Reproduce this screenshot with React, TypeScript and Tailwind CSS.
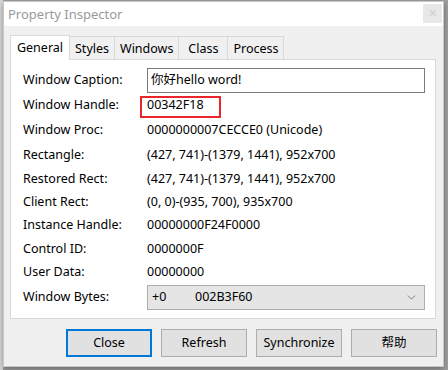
import { ChevronDown } from "lucide-react";

const rows = [
  { label: "Window Handle:", value: "00342F18", h: "h-[25px]", mark: true },
  { label: "Window Proc:", value: "0000000007CECCE0 (Unicode)", h: "h-[25px]" },
  { label: "Rectangle:", value: "(427, 741)-(1379, 1441), 952x700", h: "h-[25px]" },
  { label: "Restored Rect:", value: "(427, 741)-(1379, 1441), 952x700", h: "h-[23px]" },
  { label: "Client Rect:", value: "(0, 0)-(935, 700), 935x700", h: "h-[23px]" },
  { label: "Instance Handle:", value: "00000000F24F0000", h: "h-[23px]" },
  { label: "Control ID:", value: "0000000F", h: "h-[24px]" },
  { label: "User Data:", value: "00000000", h: "h-[23px]" },
];

const tabs = ["General", "Styles", "Windows", "Class", "Process"];
const buttons = ["Close", "Refresh", "Synchronize", "帮助"];

export default function App() {
  return (
    <div
      className="relative h-[370px] w-[448px] overflow-hidden bg-[#a0a0a0]"
      style={{ fontFamily: '"Noto Sans", "Noto Sans CJK SC", sans-serif' }}
    >
      <div className="absolute left-0 top-0 h-[370px] w-[3px] bg-[#d8d8d8]" />
      <div className="absolute left-[3px] top-[1px] flex h-[366px] w-[441px] flex-col border border-[#c8c8c8] bg-[#f0f0f0] shadow-[0_2px_6px_rgba(0,0,0,0.35)]">
        <div className="flex h-[24px] items-start justify-between bg-white">
          <span className="pl-[4px] pt-[2px] text-[13px] leading-[20px] text-[#9a9a9a]">
            Property Inspector
          </span>
          <div className="mr-[1px] mt-[2px] flex h-[19px] w-[19px] items-center justify-center bg-[#e8e8e8] text-[11px] text-[#cfcfcf]">
            ✕
          </div>
        </div>

        <div className="mt-[9px] flex h-[24px] items-end pl-[6px] text-[12.5px] text-black">
          {tabs.map((t, i) =>
            i === 0 ? (
              <div
                key={t}
                className="relative z-10 -mb-px flex h-[25px] w-[60px] items-center justify-center border border-b-0 border-[#d9d9d9] bg-white"
              >
                {t}
              </div>
            ) : (
              <div
                key={t}
                className={`-ml-px flex h-[23px] items-center justify-center border border-b-0 border-[#d9d9d9] bg-[#f0f0f0] pt-[2px] ${
                  t === "Class" ? "w-[50px]" : "px-[5px]"
                }`}
              >
                {t}
              </div>
            )
          )}
        </div>

        <div className="ml-[6px] flex h-[260px] w-[426px] flex-col border border-[#d9d9d9] bg-white pl-[12px] pt-[8px] text-[12.5px] text-black">
          <div className="flex h-[25px] items-center">
            <span className="w-[124px]">Window Caption:</span>
            <div className="flex h-[25px] w-[278px] items-center border border-[#7a7a7a] px-[3px]">
              你好hello word!
            </div>
          </div>
          {rows.map((r) => (
            <div key={r.label} className={`flex items-center ${r.h}`}>
              <span className="w-[124px]">{r.label}</span>
              <span className="relative flex h-full items-center">
                {r.value}
                {r.mark && (
                  <span className="absolute left-[-7px] top-[3px] h-[22px] w-[81px] border-2 border-[#e8262b]" />
                )}
              </span>
            </div>
          ))}
          <div className="mt-[1px] flex h-[25px] items-center">
            <span className="w-[124px]">Window Bytes:</span>
            <div className="flex h-[25px] w-[278px] items-center border border-[#adadad] bg-[#e5e5e5] pl-[4px] pr-[6px]">
              <span className="w-[43px]">+0</span>
              <span className="flex-1">002B3F60</span>
              <ChevronDown size={13} strokeWidth={1.2} className="text-[#444]" />
            </div>
          </div>
        </div>

        <div className="mt-[10px] flex justify-end gap-[9px] pr-[6px] text-[12.5px] text-black">
          {buttons.map((b, i) => (
            <div
              key={b}
              className={`flex h-[28px] w-[86px] items-center justify-center bg-[#e1e1e1] ${
                i === 0 ? "border-2 border-[#0078d7]" : "border border-[#adadad]"
              }`}
            >
              {b}
            </div>
          ))}
        </div>
      </div>
    </div>
  );
}
